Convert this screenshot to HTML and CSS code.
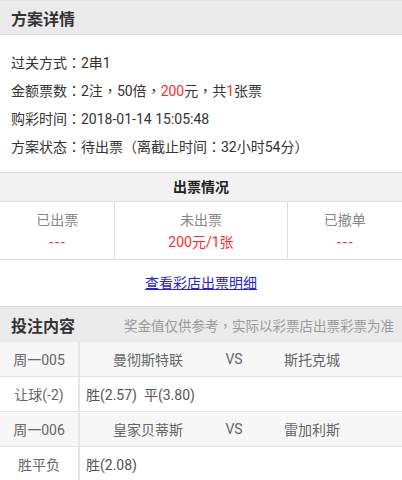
FILE: index.html
```html
<!DOCTYPE html>
<html>
<head>
<meta charset="utf-8">
<link rel="stylesheet" href="styles.css">
</head>
<body>
<div class="page">
  <div class="sec-head"><span class="sec-title">方案详情</span></div>
  <div class="info">
    <div class="line">过关方式<span class="p">：</span>2串1</div>
    <div class="line">金额票数<span class="p">：</span>2注<span class="p">，</span>50倍<span class="p">，</span><span class="red">200</span>元<span class="p">，</span>共<span class="red">1</span>张票</div>
    <div class="line">购彩时间<span class="p">：</span>2018-01-14 15:05:48</div>
    <div class="line">方案状态<span class="p">：</span>待出票<span class="p">（</span>离截止时间<span class="p">：</span>32小时54分<span class="p">）</span></div>
  </div>

  <div class="ticket">
    <div class="ticket-head">出票情况</div>
    <div class="cells">
      <div class="cell side"><div class="lbl">已出票</div><div class="val dash">---</div></div>
      <div class="cell mid"><div class="lbl">未出票</div><div class="val">200元/1张</div></div>
      <div class="cell side"><div class="lbl">已撤单</div><div class="val dash">---</div></div>
    </div>
    <div class="link-row"><a class="link" href="#">查看彩店出票明细</a></div>
  </div>

  <div class="bet">
    <div class="bet-head">
      <span class="sec-title">投注内容</span>
      <span class="note">奖金值仅供参考<span class="p">，</span>实际以彩票店出票彩票为准</span>
    </div>
    <div class="row alt">
      <div class="c1">周一005</div>
      <div class="match">
        <span class="home">曼彻斯特联</span>
        <span class="vs">VS</span>
        <span class="away">斯托克城</span>
      </div>
    </div>
    <div class="row">
      <div class="c1">让球(-2)</div>
      <div class="pick">胜(2.57)&nbsp; 平(3.80)</div>
    </div>
    <div class="row alt">
      <div class="c1">周一006</div>
      <div class="match">
        <span class="home">皇家贝蒂斯</span>
        <span class="vs">VS</span>
        <span class="away">雷加利斯</span>
      </div>
    </div>
    <div class="row">
      <div class="c1">胜平负</div>
      <div class="pick">胜(2.08)</div>
    </div>
  </div>
</div>
</body>
</html>
```

FILE: styles.css
```css
* { box-sizing: border-box; }
html, body { margin: 0; padding: 0; background: #fff; }
body {
  font-family: Roboto, "Noto Sans CJK SC", sans-serif;
  font-size: 14px;
  color: #333;
}
.page { width: 402px; }

.p { font-family: "Noto Sans CJK TC", sans-serif; }

.sec-head {
  height: 35px;
  background: #ebebeb;
  border-top: 1px solid #e2e2e2;
  border-bottom: 1px solid #dcdcdc;
  display: flex;
  align-items: center;
  padding-left: 11px;
}
.sec-title {
  font-size: 16px;
  font-weight: bold;
  color: #333;
}
.info {
  padding: 13px 11px 12px;
}
.line {
  height: 28px;
  line-height: 28px;
  white-space: nowrap;
}
.red { color: #ff2a2a; }

.ticket {
  border-top: 1px solid #dcdcdc;
}
.ticket-head {
  height: 29px;
  line-height: 29px;
  background: #f2f2f2;
  border-bottom: 1px solid #dcdcdc;
  text-align: center;
  font-weight: bold;
  color: #222;
}
.cells {
  display: flex;
  border-bottom: 1px solid #dcdcdc;
}
.cell {
  padding: 7px 0 6px;
  text-align: center;
}
.side { flex: 2; }
.mid {
  flex: 3;
  border-left: 1px solid #dcdcdc;
  border-right: 1px solid #dcdcdc;
}
.lbl {
  line-height: 22px;
  color: #888;
}
.val {
  line-height: 22px;
  color: #ff2a2a;
}
.dash {
  letter-spacing: 2px;
  padding-left: 2px;
}
.link-row {
  height: 46px;
  line-height: 46px;
  text-align: center;
}
.link {
  color: #2323d6;
  text-decoration: underline;
}

.bet {
  border-top: 1px solid #dcdcdc;
}
.bet-head {
  height: 35px;
  background: #ebebeb;
  display: flex;
  align-items: center;
  justify-content: space-between;
  padding: 0 8px 0 11px;
}
.note {
  font-size: 13.5px;
  color: #999;
  white-space: nowrap;
}
.row {
  display: flex;
  height: 35px;
  border-bottom: 1px solid #e2e2e2;
  background: #fff;
}
.row.alt { background: #f7f7f7; }
.c1 {
  width: 80px;
  border-right: 2px solid #e6e6e6;
  display: flex;
  align-items: center;
  justify-content: center;
  color: #666;
}
.match {
  display: flex;
  align-items: center;
  color: #666;
}
.home { width: 136px; text-align: center; }
.vs { width: 36px; text-align: center; }
.away { width: 120px; text-align: center; }
.pick {
  display: flex;
  align-items: center;
  padding-left: 6px;
  color: #555;
}
```
